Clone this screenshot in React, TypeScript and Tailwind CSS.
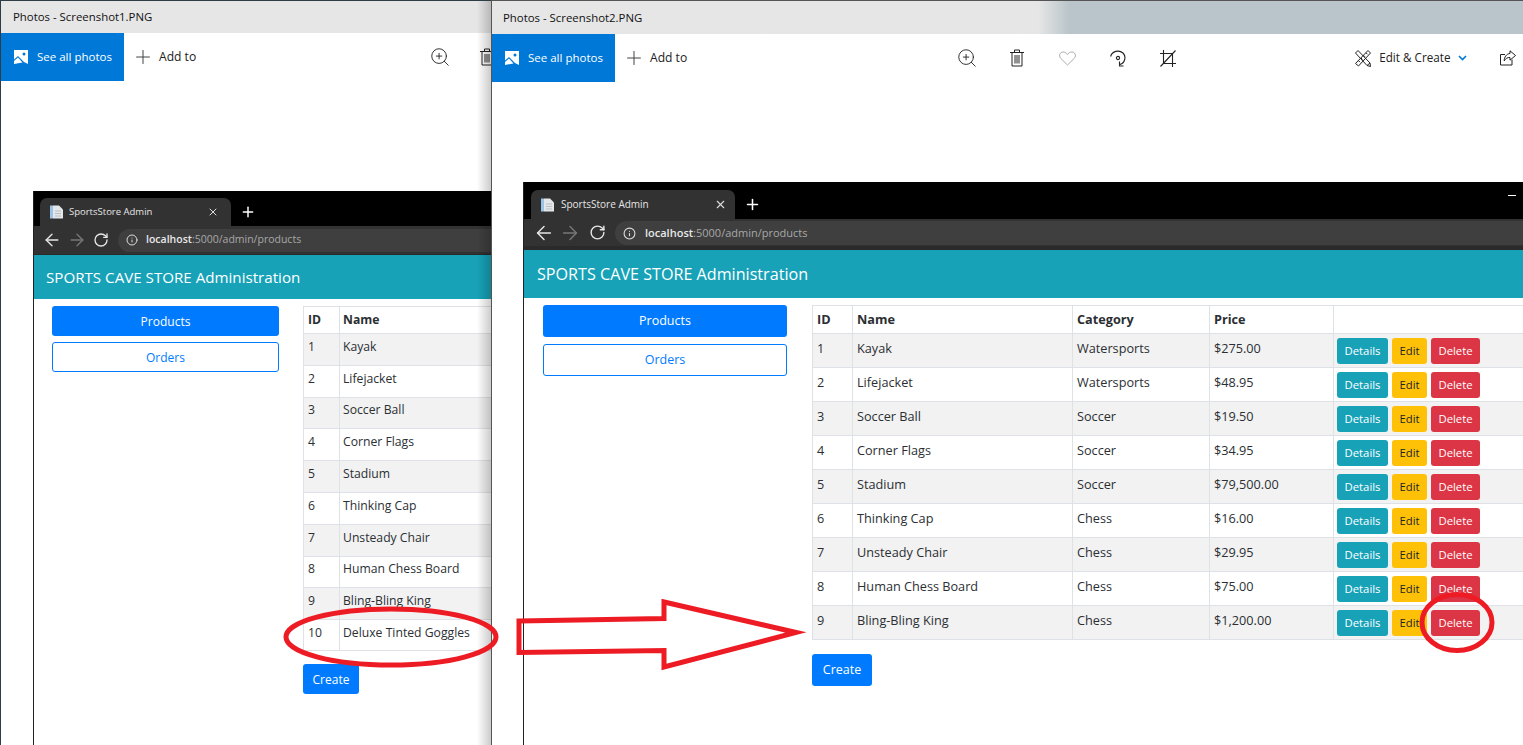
import React from "react";
import { ArrowLeft, ArrowRight, Info, Plus, RotateCw, X, ZoomIn } from "lucide-react";

const products = [
  { id: 1, name: "Kayak", category: "Watersports", price: "$275.00" },
  { id: 2, name: "Lifejacket", category: "Watersports", price: "$48.95" },
  { id: 3, name: "Soccer Ball", category: "Soccer", price: "$19.50" },
  { id: 4, name: "Corner Flags", category: "Soccer", price: "$34.95" },
  { id: 5, name: "Stadium", category: "Soccer", price: "$79,500.00" },
  { id: 6, name: "Thinking Cap", category: "Chess", price: "$16.00" },
  { id: 7, name: "Unsteady Chair", category: "Chess", price: "$29.95" },
  { id: 8, name: "Human Chess Board", category: "Chess", price: "$75.00" },
  { id: 9, name: "Bling-Bling King", category: "Chess", price: "$1,200.00" },
];

const PhotoIcon = () => (
  <svg width="14" height="14" viewBox="0 0 14 14" className="shrink-0">
    <rect width="14" height="14" fill="#fff" />
    <path d="M0 9.5 L4 6 L10 12 L14 14 L0 14Z" fill="#0078d7" />
    <path d="M0 11 L4 7.5 L8.5 12.5 L0 14Z" fill="#fff" />
    <circle cx="10" cy="4" r="1.5" fill="#0078d7" />
  </svg>
);

const TrashIcon = () => (
  <svg width="14" height="18" viewBox="0 0 14 18" fill="none" stroke="#222" strokeWidth="1">
    <path d="M0 3.5H14M4.5 3.5V1H9.5V3.5M2 3.5V17H12V3.5M5 6V14.5M7 6V14.5M9 6V14.5" />
  </svg>
);

const HeartIcon = () => (
  <svg width="17" height="15" viewBox="0 0 17 15" fill="none" stroke="#aaa" strokeWidth="1">
    <path d="M8.5 14 L1.6 7.2 C-0.6 4.6 1 1 4.2 1 C6 1 7.6 2 8.5 3.6 C9.4 2 11 1 12.8 1 C16 1 17.6 4.6 15.4 7.2Z" />
  </svg>
);

const RotateIcon = () => (
  <svg width="16" height="17" viewBox="0 0 16 17" fill="none" stroke="#222" strokeWidth="1.1">
    <path d="M0.6 6.5 C2 1 9 -0.5 13 3 C16.5 6.5 15 13 10 14.5 L9 14.7 M9.5 11.5 L9.5 16 L13.5 16" />
    <circle cx="8" cy="8" r="1.6" />
  </svg>
);

const CropIcon = () => (
  <svg width="16" height="17" viewBox="0 0 16 17" fill="none" stroke="#222" strokeWidth="1.1">
    <path d="M3.5 0V13.500H16M0 3.500H12.500V17M0.500 16.500L15.500 0.500" />
  </svg>
);

const EditCreateIcon = () => (
  <svg width="16" height="17" viewBox="0 0 16 17" fill="none" stroke="#222" strokeWidth="1">
    <path d="M0.5 3 L3 0.5 L15 13 L15.5 16.5 L12 15.5Z M12 15.5 L15 13" />
    <path d="M13 0.5 L15.5 3 L3.5 16 L0.5 13.5Z M11 2.8 L12.5 4.3 M8.5 5.3 L10 6.8 M6 8 L7.5 9.5 M3.5 10.7 L5 12.2" />
  </svg>
);

const ShareIcon = () => (
  <svg width="16" height="16" viewBox="0 0 16 16" fill="none" stroke="#222" strokeWidth="1">
    <path d="M12 9.5V15H0.5V4.5H5" />
    <path d="M10 0.8 L15.5 5.5 L10 10.2 V7.5 C7.5 7.3 5.5 8.5 4.2 11 C4.2 7 6.5 3.8 10 3.5Z" />
  </svg>
);

const DocIcon = () => (
  <svg width="13" height="14" viewBox="0 0 13 14" className="shrink-0">
    <rect x="0" y="0.5" width="3" height="13" fill="#9cc3e6" />
    <path d="M3 0.5H9L13 4.5V13.5H3Z" fill="#e4e7ea" />
    <path d="M5 6H11M5 8.5H11M5 11H11" stroke="#b8bec4" strokeWidth="1" />
  </svg>
);

function TitleBar({ title, className }: { title: string; className: string }) {
  return (
    <div className={`flex shrink-0 items-center text-[11.4px] text-[#111] ${className}`}>
      {title}
    </div>
  );
}

function SeeAllPhotos() {
  return (
    <div className="flex w-[123px] shrink-0 items-center gap-[9px] whitespace-nowrap bg-[#0078d7] pl-[13px] text-[11.5px] text-white">
      <PhotoIcon />
      See all photos
    </div>
  );
}

function AddTo() {
  return (
    <div className="ml-[11px] flex shrink-0 items-center gap-[8px] whitespace-nowrap text-[12.1px] text-[#222]">
      <Plus size={22} strokeWidth={1.1} className="-mx-[3px] text-[#444]" />
      Add to
    </div>
  );
}

function Btn({ label, className }: { label: string; className: string }) {
  return (
    <span className={`flex h-[26px] items-center justify-center rounded-[3px] pt-[1px] text-[11.3px] ${className}`}>
      {label}
    </span>
  );
}

function LeftBrowser() {
  const rows = [...products, { id: 10, name: "Deluxe Tinted Goggles", category: "", price: "" }];
  return (
    <div className="ml-[32px] mt-[110px] flex w-[600px] flex-1 flex-col border-l border-[#222] bg-white">
      <div className="flex h-[35px] items-end bg-black pl-[6px]">
        <div className="flex h-[28px] w-[191px] items-center rounded-t-[7px] bg-[#323232] pl-[10px] pr-[12px] text-[9.5px] text-[#e6e6e6]">
          <DocIcon />
          <span className="ml-[6px] flex-1">SportsStore Admin</span>
          <X size={12} className="text-[#ddd]" />
        </div>
        <Plus size={16} strokeWidth={2.2} className="mb-[6px] ml-[9px] text-white" />
      </div>
      <div className="flex h-[29px] items-center border-b border-[#2a2a2a] bg-[#323232] pl-[8px]">
        <ArrowLeft size={20} strokeWidth={1.6} className="text-[#e6e6e6]" />
        <ArrowRight size={20} strokeWidth={1.6} className="ml-[5px] text-[#777]" />
        <RotateCw size={16} strokeWidth={2} className="ml-[6px] text-[#e6e6e6]" />
        <div className="ml-[9px] flex h-[23px] flex-1 items-center rounded-l-[12px] bg-[#3f3f3f] pl-[8px] text-[10.5px] text-[#a8a8a8]">
          <Info size={12} className="mr-[8px] text-[#ddd]" />
          <span className="font-semibold text-[#e8e8e8]">localhost</span>:5000/admin/products
        </div>
      </div>
      <div className="flex h-[44px] items-center bg-[#17a2b8] pl-[12px] text-[15.15px] text-white">
        SPORTS CAVE STORE Administration
      </div>
      <div className="flex pl-[18px] pt-[7px]">
        <div className="flex w-[227px] shrink-0 flex-col gap-[6px] text-[12px]">
          <div className="flex h-[30px] items-center justify-center rounded-[3px] bg-[#007bff] pt-[1px] text-white">Products</div>
          <div className="flex h-[30px] items-center justify-center rounded-[3px] border border-[#007bff] pt-[1px] text-[#007bff]">Orders</div>
        </div>
        <div className="ml-[24px] flex-1">
          <table className="w-full table-fixed border-collapse text-[12.2px] text-[#2b2f33]">
            <colgroup>
              <col className="w-[36px]" />
              <col />
            </colgroup>
            <thead>
              <tr className="h-[27px] font-bold">
                <th className="border border-[#dee2e6] pl-[4px] text-left">ID</th>
                <th className="border border-[#dee2e6] pl-[3px] text-left">Name</th>
              </tr>
            </thead>
            <tbody>
              {rows.map((p, i) => (
                <tr key={p.id} className={`${i === 9 ? "h-[31px]" : "h-[31.8px]"} ${i % 2 === 0 ? "bg-[#f2f2f2]" : "bg-white"}`}>
                  <td className="border border-[#dee2e6] pb-[5px] pl-[4px]">{p.id}</td>
                  <td className="border border-[#dee2e6] pb-[5px] pl-[3px]">{p.name}</td>
                </tr>
              ))}
            </tbody>
          </table>
          <div className="mt-[13px] flex h-[30px] w-[56px] items-center justify-center rounded-[3px] bg-[#007bff] pt-[1px] text-[12px] text-white">
            Create
          </div>
        </div>
      </div>
    </div>
  );
}

function RightBrowser() {
  return (
    <div className="ml-[31px] mt-[100px] flex flex-1 flex-col border-l border-[#222] bg-white">
      <div className="flex h-[37px] items-end bg-black pl-[7px]">
        <div className="flex h-[29px] w-[204px] items-center rounded-t-[7px] bg-[#323232] pl-[10px] pr-[8px] text-[10px] text-[#e6e6e6]">
          <DocIcon />
          <span className="ml-[7px] flex-1">SportsStore Admin</span>
          <X size={13} className="text-[#ddd]" />
        </div>
        <Plus size={17} strokeWidth={2.2} className="mb-[6px] ml-[9px] text-white" />
        <span className="mb-[23px] ml-auto h-px w-[8px] bg-white" />
        <span className="w-[7px]" />
      </div>
      <div className="flex h-[31px] items-center border-b-[4px] border-[#2a2a2a] bg-[#323232] pl-[9px]">
        <ArrowLeft size={22} strokeWidth={1.6} className="text-[#e6e6e6]" />
        <ArrowRight size={22} strokeWidth={1.6} className="ml-[4px] text-[#777]" />
        <RotateCw size={17} strokeWidth={2} className="ml-[8px] text-[#e6e6e6]" />
        <div className="ml-[9px] flex h-[24px] flex-1 items-center rounded-l-[12px] bg-[#3f3f3f] pl-[8px] pt-[2px] text-[11px] text-[#a8a8a8]">
          <Info size={13} className="mr-[9px] text-[#ddd]" />
          <span className="font-semibold text-[#e8e8e8]">localhost</span>:5000/admin/products
        </div>
      </div>
      <div className="flex h-[48px] items-center bg-[#17a2b8] pl-[13px] text-[16.15px] text-white">
        SPORTS CAVE STORE Administration
      </div>
      <div className="flex pl-[19px] pt-[7px]">
        <div className="flex w-[244px] shrink-0 flex-col gap-[7px] text-[12.5px]">
          <div className="flex h-[32px] items-center justify-center rounded-[3px] bg-[#007bff] pt-[1px] text-white">Products</div>
          <div className="flex h-[32px] items-center justify-center rounded-[3px] border border-[#007bff] pt-[1px] text-[#007bff]">Orders</div>
        </div>
        <div className="ml-[25px] flex-1">
          <table className="w-[720px] table-fixed border-collapse text-[12.7px] text-[#2b2f33]">
            <colgroup>
              <col className="w-[40px]" />
              <col className="w-[220px]" />
              <col className="w-[137px]" />
              <col className="w-[124px]" />
              <col />
            </colgroup>
            <thead>
              <tr className="h-[28px] font-bold">
                <th className="border border-[#dee2e6] pl-[4px] text-left">ID</th>
                <th className="border border-[#dee2e6] pl-[4px] text-left">Name</th>
                <th className="border border-[#dee2e6] pl-[4px] text-left">Category</th>
                <th className="border border-[#dee2e6] pl-[4px] text-left">Price</th>
                <th className="border border-[#dee2e6]" />
              </tr>
            </thead>
            <tbody>
              {products.map((p, i) => (
                <tr key={p.id} className={`h-[34px] ${i % 2 === 0 ? "bg-[#f2f2f2]" : "bg-white"}`}>
                  <td className="border border-[#dee2e6] pb-[4px] pl-[4px]">{p.id}</td>
                  <td className="border border-[#dee2e6] pb-[4px] pl-[4px]">{p.name}</td>
                  <td className="border border-[#dee2e6] pb-[4px] pl-[4px]">{p.category}</td>
                  <td className="border border-[#dee2e6] pb-[4px] pl-[4px]">{p.price}</td>
                  <td className="border border-[#dee2e6] pl-[3px]">
                    <div className="flex gap-[4px]">
                      <Btn label="Details" className="w-[51px] bg-[#17a2b8] text-white" />
                      <Btn label="Edit" className="w-[35px] bg-[#ffc107] text-[#212529]" />
                      <Btn label="Delete" className="w-[49px] bg-[#dc3545] text-white" />
                    </div>
                  </td>
                </tr>
              ))}
            </tbody>
          </table>
          <div className="mt-[14px] flex h-[32px] w-[60px] items-center justify-center rounded-[3px] bg-[#007bff] pt-[1px] text-[12.5px] text-white">
            Create
          </div>
        </div>
      </div>
    </div>
  );
}

export default function App() {
  return (
    <div className="relative h-[745px] w-[1523px] overflow-hidden bg-white font-['Open_Sans',sans-serif]">
      {/* left photos window */}
      <div className="absolute left-0 top-0 flex h-[745px] w-[491px] flex-col overflow-hidden border-l border-t border-[#2f3e46] bg-white">
        <TitleBar title="Photos - Screenshot1.PNG" className="h-[32px] bg-[#e6e6e6] pl-[12px]" />
        <div className="flex h-[48px] shrink-0 items-stretch">
          <SeeAllPhotos />
          <AddTo />
          <div className="ml-[233px] flex items-center gap-[29px]">
            <ZoomIn size={22} strokeWidth={1} className="shrink-0 text-[#222]" />
            <TrashIcon />
          </div>
        </div>
        <LeftBrowser />
        <div className="absolute right-0 top-0 h-full w-[14px] bg-gradient-to-r from-transparent to-black/20" />
      </div>

      {/* right photos window */}
      <div className="absolute left-[491px] top-0 flex h-[745px] w-[1032px] flex-col overflow-hidden border-l border-t border-[#555] bg-white">
        <TitleBar
          title="Photos - Screenshot2.PNG"
          className="h-[33px] bg-gradient-to-r from-[#e6e6e6] from-[53%] to-[#b9c5ca] to-[56%] pl-[11px]"
        />
        <div className="flex h-[48px] shrink-0 items-stretch">
          <SeeAllPhotos />
          <AddTo />
          <div className="ml-[269px] flex shrink-0 items-center">
            <ZoomIn size={22} strokeWidth={1} className="text-[#222]" />
            <span className="ml-[32px]">
              <TrashIcon />
            </span>
            <span className="ml-[35px]">
              <HeartIcon />
            </span>
            <span className="ml-[34px]">
              <RotateIcon />
            </span>
            <span className="ml-[34px]">
              <CropIcon />
            </span>
          </div>
          <div className="ml-[179px] flex shrink-0 items-center text-[11.7px] text-[#222]">
            <EditCreateIcon />
            <span className="ml-[8px]">Edit &amp; Create</span>
            <svg width="9" height="6" viewBox="0 0 9 6" className="ml-[8px]" fill="none" stroke="#0078d7" strokeWidth="1.6">
              <path d="M1 1L4.5 4.5L8 1" />
            </svg>
            <span className="ml-[33px]">
              <ShareIcon />
            </span>
          </div>
        </div>
        <RightBrowser />
      </div>

      {/* red annotations */}
      <svg className="absolute left-0 top-0" width="1523" height="745" fill="none" stroke="#ed1c24" strokeWidth="5" strokeMiterlimit="12">
        <ellipse cx="391" cy="637" rx="105" ry="28" />
        <path d="M519 621 L664 618.500 L664 602 L796 632.500 L664 667 L664 650.500 L519 652.500Z" />
        <ellipse cx="1457" cy="622.500" rx="35" ry="28" />
      </svg>
    </div>
  );
}
